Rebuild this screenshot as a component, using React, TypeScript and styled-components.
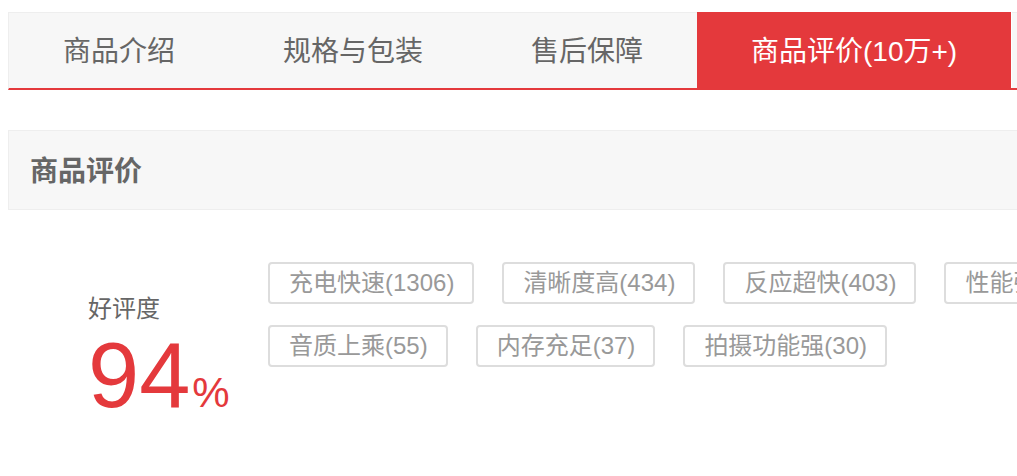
import React from "react";
import styled, { createGlobalStyle } from "styled-components";

const GlobalStyle = createGlobalStyle`
  html, body {
    margin: 0;
    padding: 0;
    background: #fff;
    overflow: hidden;
  }
  body {
    font-family: "Liberation Sans", "Noto Sans CJK SC", sans-serif;
  }
`;

const Page = styled.div`
  width: 1220px;
  padding: 12px 0 0 8px;
  box-sizing: border-box;
`;

const TabBar = styled.div`
  display: flex;
  height: 78px;
  box-sizing: border-box;
  background: #f7f7f7;
  border-top: 1px solid #eee;
  border-left: 1px solid #eee;
  border-bottom: 2px solid #e4393c;
`;

const Tab = styled.div<{ $active?: boolean }>`
  display: flex;
  align-items: center;
  justify-content: center;
  box-sizing: border-box;
  padding: 3px 54px 0;
  margin-top: ${(p) => (p.$active ? "-1px" : "0")};
  height: ${(p) => (p.$active ? "76px" : "75px")};
  background: ${(p) => (p.$active ? "#e4393c" : "transparent")};
  color: ${(p) => (p.$active ? "#fff" : "#666")};
  border-right: ${(p) => (p.$active ? "1px solid #fff" : "none")};
  font-size: 28px;
  line-height: 1;
  white-space: nowrap;
`;

const SectionHeader = styled.div`
  margin-top: 40px;
  height: 80px;
  box-sizing: border-box;
  display: flex;
  align-items: center;
  padding: 4px 0 0 21px;
  background: #f7f7f7;
  border: 1px solid #eee;
`;

const SectionTitle = styled.h2`
  margin: 0;
  font-size: 28px;
  font-weight: bold;
  color: #666;
  line-height: 1;
`;

const Summary = styled.div`
  display: flex;
  padding-top: 52px;
`;

const RateColumn = styled.div`
  width: 260px;
  box-sizing: border-box;
  padding: 32px 0 0 80px;
  display: flex;
  flex-direction: column;
`;

const RateLabel = styled.div`
  font-size: 24px;
  line-height: 29px;
  color: #666;
`;

const RateValue = styled.div`
  margin-top: 6px;
  font-family: "Liberation Sans", Arial, sans-serif;
  font-size: 92px;
  line-height: 92px;
  color: #e4393c;
  white-space: nowrap;
`;

const Percent = styled.span`
  font-size: 42px;
  margin-left: 2px;
`;

const TagList = styled.div`
  width: 900px;
  display: flex;
  flex-wrap: wrap;
  column-gap: 28px;
  row-gap: 21px;
  align-content: flex-start;
`;

const TagItem = styled.span`
  display: inline-flex;
  align-items: center;
  height: 42px;
  box-sizing: border-box;
  padding: 0 18px 0 19px;
  border: 2px solid #ddd;
  border-radius: 4px;
  font-size: 24px;
  line-height: 38px;
  color: #999;
  white-space: nowrap;
`;

const tabs = [
  { label: "商品介绍", active: false },
  { label: "规格与包装", active: false },
  { label: "售后保障", active: false },
  { label: "商品评价(10万+)", active: true },
];

const tags = [
  "充电快速(1306)",
  "清晰度高(434)",
  "反应超快(403)",
  "性能强劲(288)",
  "音质上乘(55)",
  "内存充足(37)",
  "拍摄功能强(30)",
];

export default function App() {
  return (
    <>
      <GlobalStyle />
      <Page>
        <TabBar>
          {tabs.map((t) => (
            <Tab key={t.label} $active={t.active}>
              {t.label}
            </Tab>
          ))}
        </TabBar>
        <SectionHeader>
          <SectionTitle>商品评价</SectionTitle>
        </SectionHeader>
        <Summary>
          <RateColumn>
            <RateLabel>好评度</RateLabel>
            <RateValue>
              94<Percent>%</Percent>
            </RateValue>
          </RateColumn>
          <TagList>
            {tags.map((t) => (
              <TagItem key={t}>{t}</TagItem>
            ))}
          </TagList>
        </Summary>
      </Page>
    </>
  );
}
